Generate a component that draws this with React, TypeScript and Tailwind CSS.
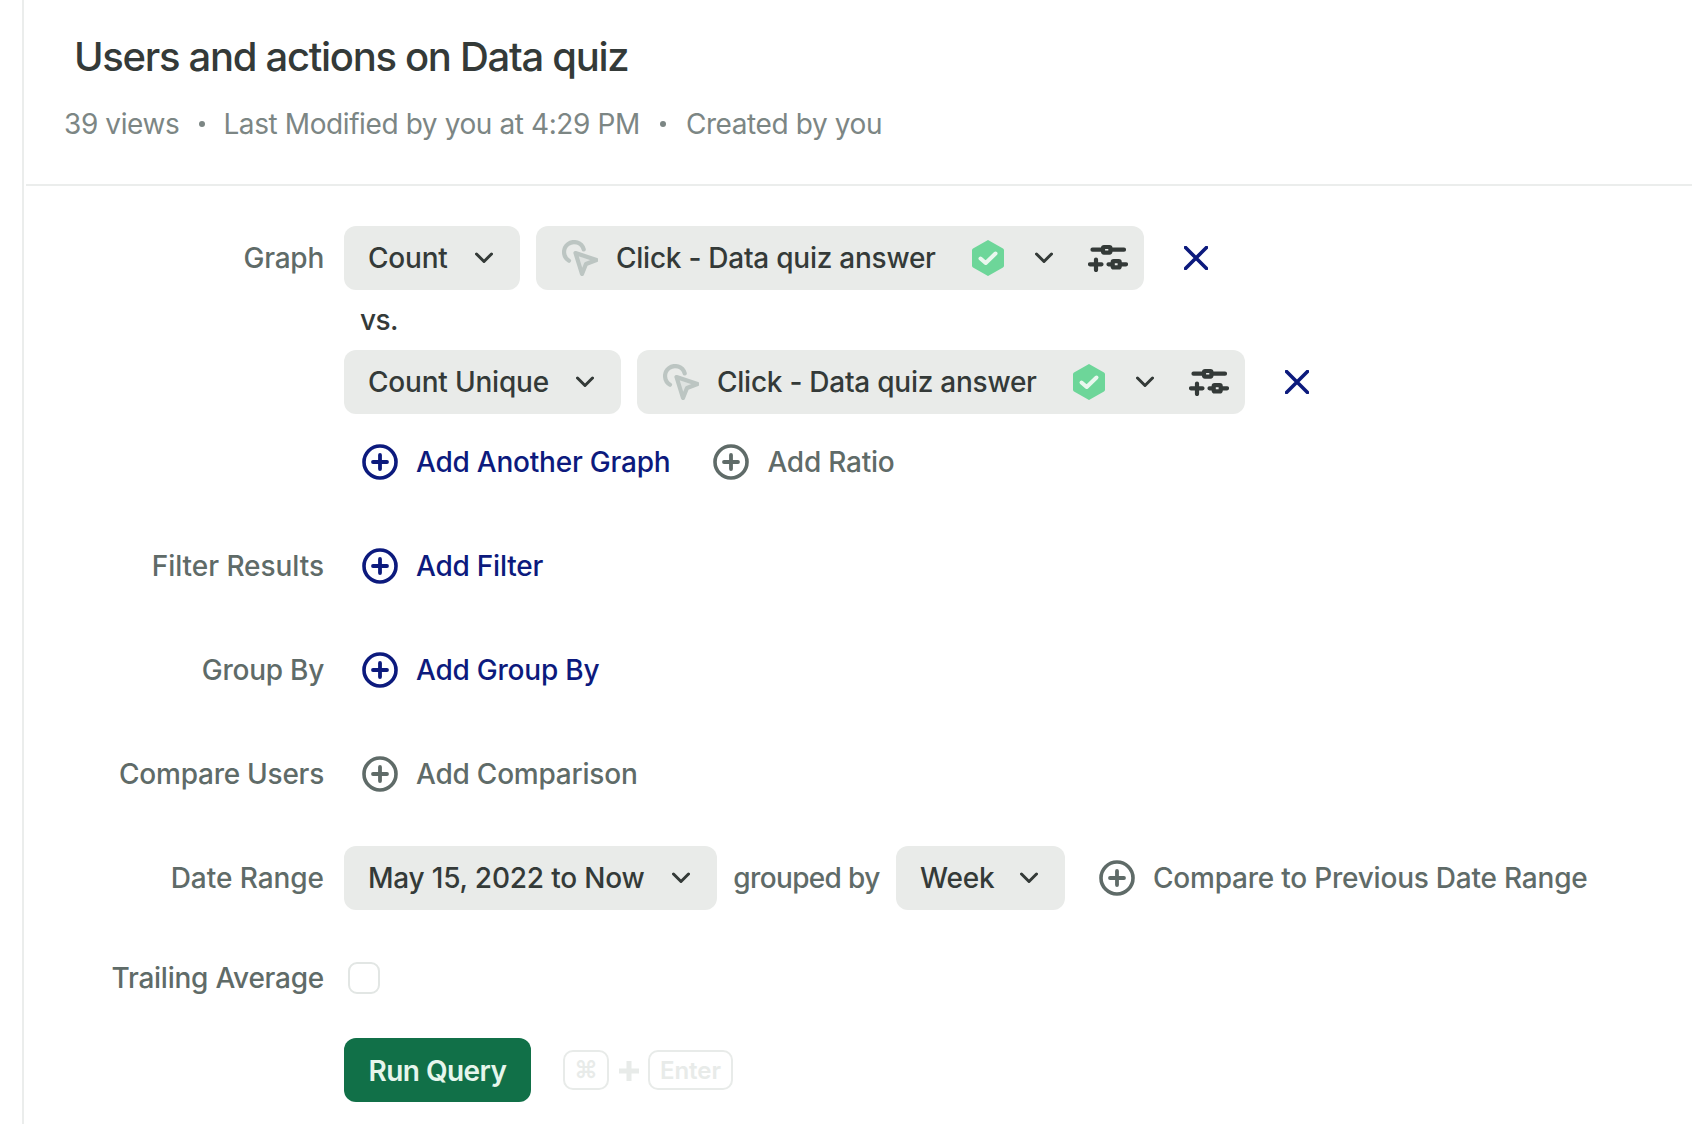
import React from 'react';

const Chevron = () => (
  <svg width="18" height="12" viewBox="0 0 18 12" fill="none" className="shrink-0">
    <path d="M1.5 2L9 9.5L16.5 2" stroke="#343a38" strokeWidth="3" strokeLinecap="round" strokeLinejoin="round" />
  </svg>
);

const PlusCircle = ({ color }: { color: string }) => (
  <svg width="36" height="36" viewBox="0 0 36 36" fill="none" className="shrink-0">
    <circle cx="18" cy="18" r="16" stroke={color} strokeWidth="3.6" />
    <path d="M18 11V25M11 18H25" stroke={color} strokeWidth="3.8" strokeLinecap="round" />
  </svg>
);

const CursorClick = () => (
  <svg width="36" height="36" viewBox="0 0 36 36" fill="none" className="shrink-0">
    <path d="M21.7 9.4A10 10 0 1 0 7 20.7" stroke="#bcc5c2" strokeWidth="4.2" strokeLinecap="round" />
    <path d="M13.5 13L34.5 20L24 24L20 34Z" fill="#dfe3e1" stroke="#bcc5c2" strokeWidth="4.2" strokeLinejoin="round" />
  </svg>
);

const Shield = () => (
  <svg width="32" height="36" viewBox="0 0 32 36" className="shrink-0">
    <path d="M16 0L31 8.5Q32 9 32 10.5V25.5Q32 27 31 27.5L16 36L1 27.5Q0 27 0 25.5V10.5Q0 9 1 8.5Z" fill="#6dd699" />
    <path d="M8.5 18.5L13.7 23L23.5 13.5" stroke="#e9f7ee" strokeWidth="4" fill="none" strokeLinecap="round" strokeLinejoin="round" />
  </svg>
);

const Sliders = () => (
  <svg width="40" height="28" viewBox="0 0 40 28" fill="none" className="shrink-0">
    <path d="M4.5 5.7H14M23 5.7H36" stroke="#343a38" strokeWidth="4.2" strokeLinecap="round" />
    <rect x="15" y="3" width="7.4" height="5.6" stroke="#343a38" strokeWidth="4.2" rx="1" />
    <path d="M2 20.3H13.5M8 15.5V26M20.5 20.3H24M33 20.3H38" stroke="#343a38" strokeWidth="4.2" strokeLinecap="round" />
    <rect x="24.7" y="17.2" width="7" height="6.2" stroke="#343a38" strokeWidth="4.2" rx="1" />
  </svg>
);

const CloseIcon = () => (
  <svg width="24" height="24" viewBox="0 0 24 24" fill="none" className="shrink-0">
    <path d="M1.5 1.5L22.5 22.5M22.5 1.5L1.5 22.5" stroke="#0c1a7d" strokeWidth="3.6" strokeLinecap="round" />
  </svg>
);

const Pill = ({ label, width }: { label: string; width: string }) => (
  <button className={`h-16 ${width} shrink-0 flex items-center justify-between pl-6 pr-[27px] bg-[#e9ebe9] rounded-xl text-[#343a38] text-[28px] font-medium tracking-[-0.2px]`}>
    <span>{label}</span>
    <Chevron />
  </button>
);

const EventPicker = () => (
  <div className="flex items-center">
    <div className="h-16 w-[608px] shrink-0 flex items-center pl-[26px] bg-[#e9ebe9] rounded-xl text-[#343a38] text-[28px] font-medium tracking-[-0.25px]">
      <CursorClick />
      <span className="ml-[18px] w-[356px] whitespace-nowrap">Click - Data quiz answer</span>
      <Shield />
      <div className="ml-[31px] flex"><Chevron /></div>
      <div className="ml-[35px] flex"><Sliders /></div>
    </div>
    <div className="ml-10 flex"><CloseIcon /></div>
  </div>
);

const AddLink = ({ text, muted = false }: { text: string; muted?: boolean }) => (
  <div className="flex items-center gap-[18px]">
    <PlusCircle color={muted ? '#5f6b68' : '#0c1a7d'} />
    <span className={`text-[28px] font-medium tracking-[-0.22px] whitespace-nowrap ${muted ? 'text-[#5f6b68]' : 'text-[#0c1a7d]'}`}>{text}</span>
  </div>
);

const Row = ({ label, className = '', labelClass = 'tracking-[-0.25px]', children }: { label?: string; className?: string; labelClass?: string; children: React.ReactNode }) => (
  <div className={`flex items-center h-16 ${className}`}>
    <div className={`w-[300px] shrink-0 text-right text-[28px] font-medium ${labelClass} text-[#5f6b68] whitespace-nowrap`}>{label}</div>
    <div className="ml-5 flex items-center">{children}</div>
  </div>
);

export default function App() {
  return (
    <div className="w-[1692px] h-[1124px] bg-white overflow-hidden font-['Inter',sans-serif]">
      <div className="ml-[22px] h-full border-l-2 border-[#ebedec]">
        <div className="h-[186px] ml-0.5 border-b-2 border-[#ebedec]">
          <h1 className="pt-[32px] pl-[48px] text-[40px] leading-[50px] font-medium tracking-[-1.3px] text-[#343a38]">Users and actions on Data quiz</h1>
          <div className="mt-6 pl-[38px] flex items-center text-[28px] leading-9 tracking-[-0.4px] text-[#7c8684]">
            <span>39 views</span>
            <span className="ml-[20px] mr-[18px] w-[6px] h-[6px] rounded-full bg-[#7c8684]" />
            <span>Last Modified by you at 4:29 PM</span>
            <span className="mx-5 w-[6px] h-[6px] rounded-full bg-[#7c8684]" />
            <span>Created by you</span>
          </div>
        </div>

        <div className="pt-10">
          <Row label="Graph">
            <Pill label="Count" width="w-[176px]" />
            <div className="ml-4"><EventPicker /></div>
          </Row>
          <div className="h-[60px] flex items-center pl-[336px] text-[28px] font-medium tracking-[-0.6px] text-[#343a38]">vs.</div>
          <Row>
            <Pill label="Count Unique" width="w-[277px]" />
            <div className="ml-4"><EventPicker /></div>
          </Row>
          <Row className="mt-4">
            <div className="ml-[18px] flex items-center gap-[43px]">
              <AddLink text="Add Another Graph" />
              <AddLink text="Add Ratio" muted />
            </div>
          </Row>
          <Row label="Filter Results" className="mt-10" labelClass="tracking-[-0.05px]">
            <div className="ml-[18px]"><AddLink text="Add Filter" /></div>
          </Row>
          <Row label="Group By" className="mt-10">
            <div className="ml-[18px]"><AddLink text="Add Group By" /></div>
          </Row>
          <Row label="Compare Users" className="mt-10">
            <div className="ml-[18px]"><AddLink text="Add Comparison" muted /></div>
          </Row>
          <Row label="Date Range" className="mt-10" labelClass="tracking-[-0.05px]">
            <Pill label="May 15, 2022 to Now" width="w-[373px]" />
            <span className="w-[179px] shrink-0 text-center text-[28px] font-medium tracking-[-0.65px] text-[#5f6b68] whitespace-nowrap">grouped by</span>
            <Pill label="Week" width="w-[169px]" />
            <div className="ml-[34px]"><AddLink text="Compare to Previous Date Range" muted /></div>
          </Row>
          <Row label="Trailing Average" className="mt-9">
            <div className="ml-1 w-8 h-8 rounded-[9px] border-2 border-[#e2e6e4] bg-white" />
          </Row>
          <Row className="mt-7">
            <button className="h-16 w-[187px] pt-px rounded-xl bg-[#117048] text-[#e6f6ec] text-[28px] font-semibold tracking-[-0.55px]">Run Query</button>
            <div className="ml-8 flex items-center text-[#e8ebe9] text-2xl font-semibold">
              <div className="w-[46px] h-10 flex items-center justify-center rounded-[10px] border-2 border-[#e8ebe9]">⌘</div>
              <svg width="20" height="20" viewBox="0 0 20 20" className="ml-[10px] mr-[9px] mt-0.5">
                <path d="M10 0V20M0 10H20" stroke="#e8ebe9" strokeWidth="5" />
              </svg>
              <div className="w-[85px] h-10 pt-px flex items-center justify-center rounded-[10px] border-2 border-[#e8ebe9]">Enter</div>
            </div>
          </Row>
        </div>
      </div>
    </div>
  );
}
